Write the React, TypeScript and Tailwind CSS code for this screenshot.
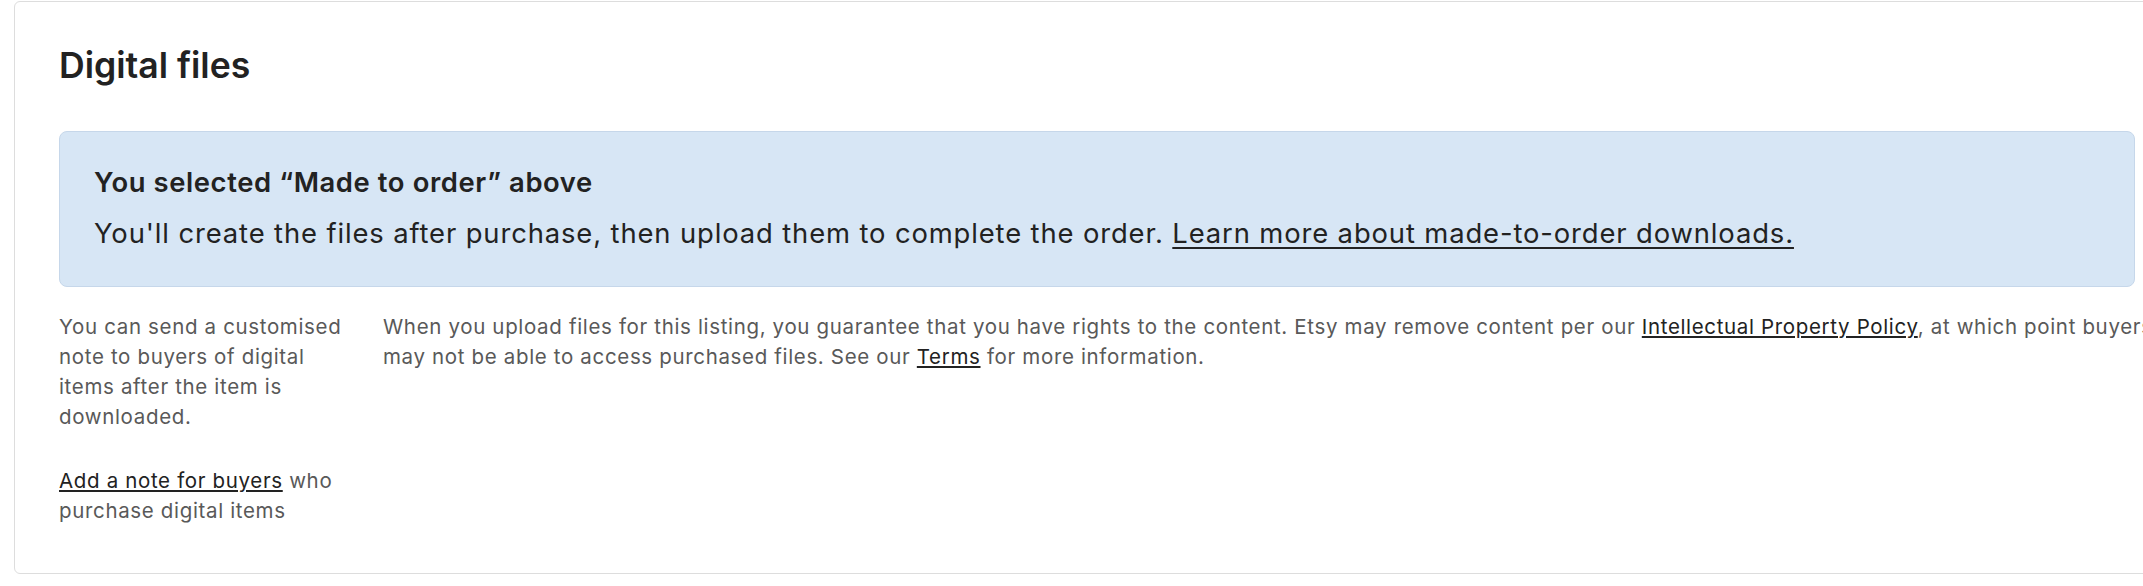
import React from "react";

export default function App() {
  return (
    <div
      className="w-full h-[586px] overflow-hidden bg-white"
      style={{ fontFamily: "Inter, 'Noto Sans', 'Liberation Sans', sans-serif" }}
    >
      <div className="ml-[14px] mt-[1px] w-[2166px] rounded-[6px] border border-[#dddddd] bg-white px-[44px] pt-[41px] pb-[47px]">
        <h2 className="text-[35.6px] leading-[45px] font-semibold text-[#222222]">Digital files</h2>

        <div className="mt-[43px] rounded-[8px] border border-[#c6d7ea] bg-[#d7e6f5] pl-[34px] pr-[34px] pt-[32px] pb-[34px] text-[#222222]">
          <p className="text-[27.4px] leading-[36px] font-semibold tracking-[0.022em]">You selected “Made to order” above</p>
          <p className="mt-[14px] text-[27.4px] leading-[38px] tracking-[0.032em]">
            You'll create the files after purchase, then upload them to complete the order.{" "}
            <a href="#" className="underline underline-offset-[4px] decoration-[1.5px]">
              Learn more about made-to-order downloads.
            </a>
          </p>
        </div>

        <div className="mt-[25px] flex gap-[24px] text-[20.5px] leading-[30px] tracking-[0.032em] text-[#595959]">
          <div className="w-[300px] shrink-0">
            <p>You can send a customised note to buyers of digital items after the item is downloaded.</p>
            <p className="mt-[34px]">
              <a href="#" className="text-[#222222] underline underline-offset-[2px]">
                Add a note for buyers
              </a>{" "}
              who purchase digital items
            </p>
          </div>
          <div className="w-[1900px] shrink-0">
            <p className="whitespace-nowrap">
              When you upload files for this listing, you guarantee that you have rights to the content. Etsy may remove content per our{" "}
              <a href="#" className="text-[#222222] underline underline-offset-[2px]">
                Intellectual Property Policy
              </a>
              , at which point buyers
              <br />
              may not be able to access purchased files. See our{" "}
              <a href="#" className="text-[#222222] underline underline-offset-[2px]">
                Terms
              </a>{" "}
              for more information.
            </p>
          </div>
        </div>
      </div>
    </div>
  );
}
